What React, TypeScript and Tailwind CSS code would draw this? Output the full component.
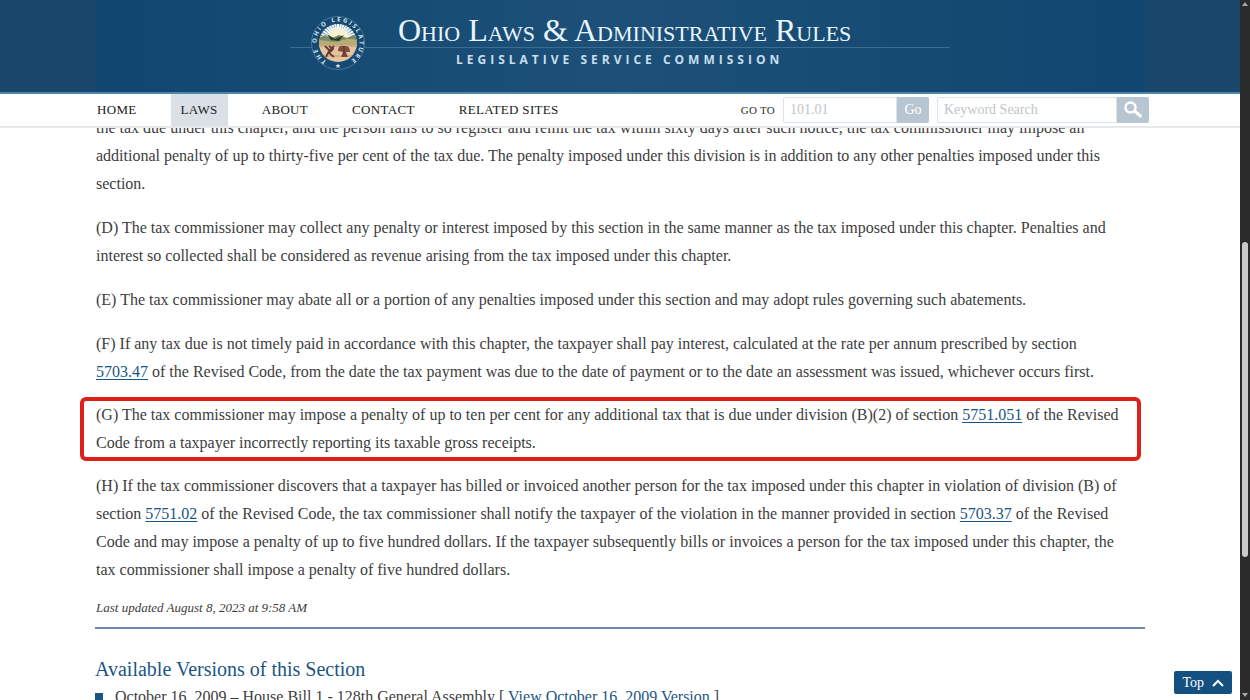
import type { ReactNode } from "react";

const navItems = [
  { label: "HOME", href: "#home" },
  { label: "LAWS", href: "#laws", active: true },
  { label: "ABOUT", href: "#about" },
  { label: "CONTACT", href: "#contact" },
  { label: "RELATED SITES", href: "#related" },
];

const rays = Array.from({ length: 19 }, (_, i) => i * 10 - 90);

function Seal() {
  return (
    <svg aria-label="The Ohio Legislature seal" className="size-14 shrink-0" role="img" viewBox="0 0 56 56">
      <defs>
        <path d="M18 47 A21.5 21.5 0 1 1 38 47" id="seal-ring" />
        <clipPath id="seal-disc">
          <circle cx="28" cy="28" r="19" />
        </clipPath>
      </defs>
      <circle cx="28" cy="28" fill="#174a72" r="26.5" stroke="#4a7796" strokeWidth="1" />
      <g clipPath="url(#seal-disc)">
        <rect fill="#527f9f" height="28" width="56" />
        {rays.map((angle) => (
          <path d="M27 8 L28 4 L29 8 L29 25 H27Z" fill="#f4f8fa" key={angle} transform={`rotate(${angle} 28 25)`} />
        ))}
        <circle cx="28" cy="25" fill="#f8f2cf" r="11" />
        <path d="M6 24 L15 20 L22 23 L29 20 L37 23 L43 20 L50 24 V31 H6Z" fill="#7d8a63" />
        <path d="M6 26 C14 23 22 29 30 26 S43 24 50 26 V32 H6Z" fill="#b5ad74" />
        <path d="M17 19 L25 24 L34 20 L29 26 L21 25Z" fill="#263f31" />
        <rect fill="#e3c5a0" height="20" width="44" x="6" y="30" />
        <path d="M7 31 H49 M11 41 H46" stroke="#b9966f" strokeWidth="1" />
        <path d="M19 31 L23 34 L19 38 L24 42 M24 31 L19 36 L16 42 M15 31 L19 35" fill="none" stroke="#6c3932" strokeWidth="1.8" />
        <path d="M28 36 Q28 30 34 31 Q40 30 40 37 L36 37 L38 42 H31 L33 37Z" fill="#864c3e" />
        <path d="M34 31 V41" stroke="#4f2d2c" strokeWidth="1" />
      </g>
      <text className="font-['Open_Sans',sans-serif] text-[6px] font-bold tracking-[2px]" fill="#d9e8f0">
        <textPath href="#seal-ring" startOffset="50%" textAnchor="middle">
          THE OHIO LEGISLATURE
        </textPath>
      </text>
      <path d="M28 48.5 L28.8 50.2 L30.5 50.3 L29.2 51.4 L29.6 53 L28 52.1 L26.4 53 L26.8 51.4 L25.5 50.3 L27.2 50.2Z" fill="#d9e8f0" />
    </svg>
  );
}

function SearchIcon() {
  return (
    <svg aria-hidden="true" className="size-5" fill="none" viewBox="0 0 20 20">
      <circle cx="7.5" cy="7.5" r="5" stroke="white" strokeWidth="2.4" />
      <path d="M11.5 11 L17.5 16" stroke="white" strokeLinecap="round" strokeWidth="3" />
    </svg>
  );
}

function CodeLink({ children }: { children: ReactNode }) {
  return (
    <a className="text-[#1b5583] underline underline-offset-2" href="#section">
      {children}
    </a>
  );
}

function Header() {
  return (
    <header className="relative z-10 shrink-0">
      <div className="border-b-2 border-[#4f86ad] bg-[#19476b]">
        <div className="mx-auto flex h-23 max-w-[1050px] justify-center bg-linear-to-r from-[#10466f] via-[#1c5079] to-[#10466f]">
          <div className="relative flex h-23 w-[660px] pt-4 pl-5">
            <div className="absolute inset-x-0 top-[47px] h-px bg-[#3c6d91]" />
            <div className="relative -mt-px">
              <Seal />
            </div>
            <div className="relative ml-8 whitespace-nowrap text-[#e9f5fc]">
              <h1 className="font-['Liberation_Serif',serif] text-[32px] leading-7 [font-variant:small-caps]">
                Ohio Laws &amp; Administrative Rules
              </h1>
              <p className="mt-2 pl-[58px] font-['Open_Sans',sans-serif] text-xs leading-4 font-bold tracking-[4px] text-[#c9deec]">
                LEGISLATIVE SERVICE COMMISSION
              </p>
            </div>
          </div>
        </div>
      </div>
      <div className="border-b-2 border-[#e5e9ec] bg-white">
        <div className="mx-auto flex h-8 max-w-[1050px] items-center justify-between">
          <nav aria-label="Main" className="-ml-2 flex h-full gap-6 text-[13px] tracking-wide text-[#202020]">
            {navItems.map((item) => (
              <a
                className={`flex h-full items-center px-[10px] whitespace-nowrap ${item.active ? "bg-[#dae0e5]" : ""}`}
                href={item.href}
                key={item.label}
              >
                {item.label}
              </a>
            ))}
          </nav>
          <div className="-mr-1 flex items-center gap-2">
            <form className="flex items-center" onSubmit={(event) => event.preventDefault()}>
              <label className="mr-2 text-[11px] tracking-wide whitespace-nowrap text-[#303030]" htmlFor="goto">
                GO TO
              </label>
              <input
                className="h-[26px] w-[114px] rounded-l-xs border border-[#dce2e7] px-[6px] text-sm outline-none placeholder:text-[#c0c5c9]"
                id="goto"
                placeholder="101.01"
              />
              <button className="h-[26px] w-8 rounded-r-xs bg-[#b8c6d1] text-sm text-white" type="submit">
                Go
              </button>
            </form>
            <form className="flex" onSubmit={(event) => event.preventDefault()}>
              <input
                aria-label="Keyword Search"
                className="h-[26px] w-[180px] rounded-l-xs border border-[#dce2e7] px-[6px] text-sm outline-none placeholder:text-[#c0c5c9]"
                placeholder="Keyword Search"
              />
              <button
                aria-label="Search"
                className="flex h-[26px] w-8 items-center justify-center rounded-r-xs bg-[#b8c6d1]"
                type="submit"
              >
                <SearchIcon />
              </button>
            </form>
          </div>
        </div>
      </div>
    </header>
  );
}

export default function App() {
  return (
    <div className="flex h-screen overflow-hidden bg-white font-['Liberation_Serif',serif] text-[#3d3d3d]">
      <div className="relative flex min-w-0 flex-1 flex-col">
        <Header />
        <main className="mx-auto -mt-[14px] min-h-0 w-full max-w-[1050px] flex-1 px-px">
          <div className="text-base leading-7 whitespace-nowrap">
            <p className="mb-4">
              the tax due under this chapter, and the person fails to so register and remit the tax within sixty days after such notice, the tax commissioner may impose an
              <br />
              additional penalty of up to thirty-five per cent of the tax due. The penalty imposed under this division is in addition to any other penalties imposed under this
              <br />
              section.
            </p>
            <p className="mb-4">
              (D) The tax commissioner may collect any penalty or interest imposed by this section in the same manner as the tax imposed under this chapter. Penalties and
              <br />
              interest so collected shall be considered as revenue arising from the tax imposed under this chapter.
            </p>
            <p className="mb-4">
              (E) The tax commissioner may abate all or a portion of any penalties imposed under this section and may adopt rules governing such abatements.
            </p>
            <p>
              (F) If any tax due is not timely paid in accordance with this chapter, the taxpayer shall pay interest, calculated at the rate per annum prescribed by section
              <br />
              <CodeLink>5703.47</CodeLink> of the Revised Code, from the date the tax payment was due to the date of payment or to the date an assessment was issued, whichever occurs first.
            </p>
            <p className="my-[11px] mr-[3px] -ml-4 rounded-md border-4 border-[#de2018] pl-3">
              (G) The tax commissioner may impose a penalty of up to ten per cent for any additional tax that is due under division (B)(2) of section <CodeLink>5751.051</CodeLink> of the Revised
              <br />
              Code from a taxpayer incorrectly reporting its taxable gross receipts.
            </p>
            <p>
              (H) If the tax commissioner discovers that a taxpayer has billed or invoiced another person for the tax imposed under this chapter in violation of division (B) of
              <br />
              section <CodeLink>5751.02</CodeLink> of the Revised Code, the tax commissioner shall notify the taxpayer of the violation in the manner provided in section <CodeLink>5703.37</CodeLink> of the Revised
              <br />
              Code and may impose a penalty of up to five hundred dollars. If the taxpayer subsequently bills or invoices a person for the tax imposed under this chapter, the
              <br />
              tax commissioner shall impose a penalty of five hundred dollars.
            </p>
          </div>
          <p className="mt-3 text-[13px] leading-6 italic">Last updated August 8, 2023 at 9:58 AM</p>
          <section className="-mx-px mt-[7px] border-t-2 border-[#6d87a8] pt-6">
            <h2 className="text-xl leading-8 text-[#1b5583]">Available Versions of this Section</h2>
            <ul className="text-base leading-6">
              <li className="flex items-center gap-3 whitespace-nowrap">
                <span className="size-2 bg-[#1b5583]" />
                <span>
                  October 16, 2009 – House Bill 1 - 128th General Assembly [ <CodeLink>View October 16, 2009 Version</CodeLink> ]
                </span>
              </li>
            </ul>
          </section>
        </main>
        <button
          className="absolute right-2 bottom-[6px] z-10 flex h-[23px] items-center gap-2 rounded-xs bg-[#14507f] px-2 text-sm text-white"
          type="button"
        >
          Top
          <svg aria-hidden="true" className="h-2 w-3" fill="none" viewBox="0 0 12 8">
            <path d="M1 7 L6 2 L11 7" stroke="white" strokeWidth="2" />
          </svg>
        </button>
      </div>
      <div aria-hidden="true" className="relative w-[10px] shrink-0 bg-[#2b2b2b]">
        <div className="absolute inset-x-[2px] top-[242px] h-[315px] rounded-full bg-[#c9c9c9]" />
        <svg className="absolute top-[2px] left-[2px] h-1 w-[6px]" viewBox="0 0 6 4">
          <path d="M0 4 L3 0 L6 4Z" fill="#a8a8a8" />
        </svg>
        <svg className="absolute bottom-[3px] left-[2px] h-1 w-[6px]" viewBox="0 0 6 4">
          <path d="M0 0 L3 4 L6 0Z" fill="#a8a8a8" />
        </svg>
      </div>
    </div>
  );
}
